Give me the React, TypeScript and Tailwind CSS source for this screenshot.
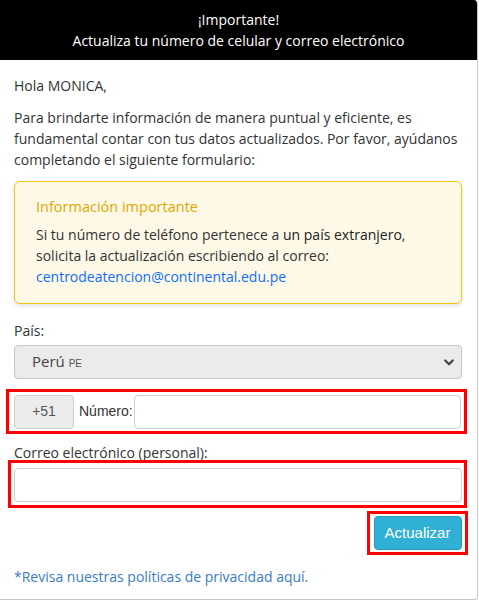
import React from 'react';

const geo = { fontFamily: '"Open Sans", "Noto Sans", sans-serif' };
const arial = { fontFamily: '"Liberation Sans", Arial, sans-serif' };

const App: React.FC = () => {
  return (
    <div className="w-[479px] h-[601px] bg-white overflow-hidden" style={geo}>
      <div className="w-[478px] h-[600px] border-r border-b border-[#c8c8c8] rounded-r-[4px] overflow-hidden flex flex-col">
        <div className="bg-black h-[60px] flex flex-col items-center justify-center text-white text-[14px] leading-[21px] font-medium">
          <p>¡Importante!</p>
          <p>Actualiza tu número de celular y correo electrónico</p>
        </div>

        <div className="px-[14px] pt-[15px] text-[#333] text-[14px] leading-[21px]">
          <p>Hola MONICA,</p>
          <p className="mt-[11px]">
            Para brindarte información de manera puntual y eficiente, es fundamental contar con tus datos actualizados. Por
            favor, ayúdanos completando el siguiente formulario:
          </p>

          <div className="mt-[11px] w-[448px] rounded-[6px] border border-[#f5c518] bg-[#fef9e6] shadow-[0_2px_4px_rgba(0,0,0,0.12)] px-[21px] pt-[13px] pb-[16px]">
            <p className="text-[#e2a600] text-[14.5px] leading-[24px]">Información importante</p>
            <p className="mt-[5px] text-[#333]">
              Si tu número de teléfono pertenece a <span className="font-medium text-[#222]">un país extranjero</span>,
              <br />
              solicita la actualización escribiendo al correo:
              <br />
              <span className="text-[#0d6efd]">centrodeatencion@continental.edu.pe</span>
            </p>
          </div>

          <p className="mt-[16px]">País:</p>
          <div className="mt-[4px] h-[34px] w-[448px] rounded-[4px] border border-[#c6c6c6] bg-[#ebebeb] flex items-center justify-between pl-[17px] pr-[6px]">
            <span className="text-[#444] text-[15px]">
              Perú <span className="text-[10px] text-[#555]" style={arial}>PE</span>
            </span>
            <svg width="12" height="12" viewBox="0 0 16 16" fill="none" stroke="#444" strokeWidth="3" strokeLinecap="round" strokeLinejoin="round">
              <path d="M3 6l5 5 5-5" />
            </svg>
          </div>
        </div>

        <div className="mt-[10px] ml-[6px] w-[461px] h-[45px] border-[3px] border-[#ff0000] flex items-center gap-[5px] pl-[5px] pr-[3px]">
          <div className="w-[60px] h-[34px] rounded-[4px] border border-[#cfcfcf] bg-[#ececec] flex items-center justify-center text-[#555] text-[14px]" style={arial}>
            +51
          </div>
          <span className="text-[#333] text-[14px]" style={arial}>Número:</span>
          <div className="flex-1 h-[34px] rounded-[4px] border border-[#cfcfcf] bg-white -ml-[4px]"></div>
        </div>

        <p className="mt-[12px] px-[14px] text-[#333] text-[14px] leading-[14px]">Correo electrónico (personal):</p>

        <div className="ml-[8px] w-[459px] h-[48px] border-[3px] border-[#ff0000] flex items-start pt-[5px] pl-[3px] pr-[2px]">
          <div className="flex-1 h-[34px] rounded-[4px] border border-[#cfcfcf] bg-white"></div>
        </div>

        <div className="mt-[3px] flex justify-end pr-[9px]">
          <div className="w-[101px] h-[44px] border-[3px] border-[#ff0000] flex items-center justify-center">
            <button className="w-[88px] h-[34px] rounded-[4px] bg-[#31b0d5] border border-[#269abc] text-white text-[15px]" style={arial}>
              Actualizar
            </button>
          </div>
        </div>

        <p className="mt-[11px] px-[14px] text-[#3a7bbf] text-[14px] leading-[21px]">*Revisa nuestras políticas de privacidad aquí.</p>
      </div>
    </div>
  );
};

export default App;
